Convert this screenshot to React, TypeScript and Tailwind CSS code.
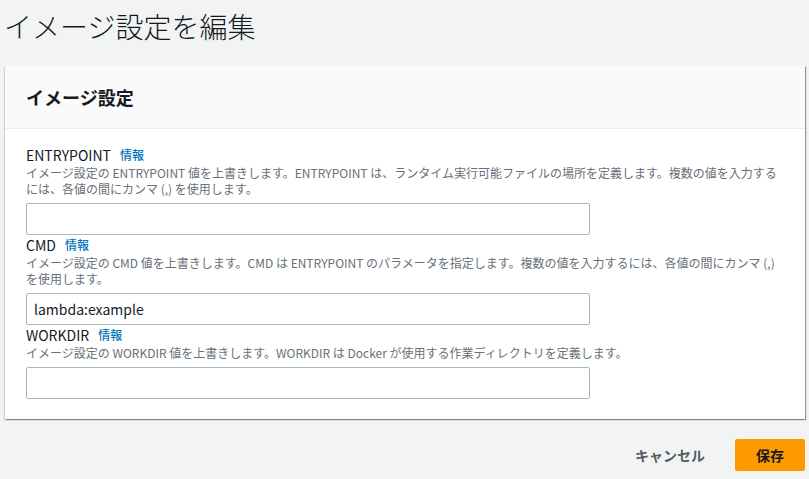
import React from 'react';

const font = { fontFamily: '"Noto Sans CJK JP", "Noto Sans", sans-serif' };

interface FieldProps {
  label: string;
  description: string;
  value?: string;
}

const Field: React.FC<FieldProps> = ({ label, description, value }) => (
  <div className="flex flex-col">
    <div className="flex items-center h-[20px] text-[14px] text-[#16191f]">
      <span>{label}</span>
      <a className="ml-[9px] text-[12px] font-medium text-[#0073bb]">情報</a>
    </div>
    <p className="text-[12px] leading-[16px] text-[#687078]">{description}</p>
    <div className="mt-[6px] w-[564px] h-[32px] border border-[#aab7b8] rounded-[2px] bg-white flex items-center px-[7px] text-[14px] text-[#16191f]">
      {value}
    </div>
  </div>
);

export default function App() {
  return (
    <div className="min-h-[479px] bg-[#f2f3f3] px-[5px]" style={font}>
      <h1 className="text-[28px] leading-[52px] font-light text-[#16191f] -ml-[1px]">イメージ設定を編集</h1>
      <div className="mt-[14px] w-[800px] bg-white shadow-[1px_1px_1px_0_rgba(0,28,36,0.3),1px_1px_1px_0_rgba(0,28,36,0.15),-1px_1px_1px_0_rgba(0,28,36,0.15)]">
        <div className="bg-[#fafafa] border-b border-[#eaeded] px-[21px] py-[20px]">
          <h2 className="text-[18px] leading-[22px] font-bold text-[#16191f]">イメージ設定</h2>
        </div>
        <div className="px-[21px] pt-[16px] pb-[20px] pr-[19px] flex flex-col">
          <Field
            label="ENTRYPOINT"
            description="イメージ設定の ENTRYPOINT 値を上書きします。ENTRYPOINT は、ランタイム実行可能ファイルの場所を定義します。複数の値を入力するには、各値の間にカンマ (,) を使用します。"
          />
          <Field
            label="CMD"
            description="イメージ設定の CMD 値を上書きします。CMD は ENTRYPOINT のパラメータを指定します。複数の値を入力するには、各値の間にカンマ (,) を使用します。"
            value="lambda:example"
          />
          <Field
            label="WORKDIR"
            description="イメージ設定の WORKDIR 値を上書きします。WORKDIR は Docker が使用する作業ディレクトリを定義します。"
          />
        </div>
      </div>
      <div className="w-[800px] flex justify-end items-center gap-[10px] pt-[20px]">
        <button className="h-[32px] px-[20px] text-[14px] font-bold text-[#545b64]">キャンセル</button>
        <button className="h-[32px] w-[70px] rounded-[2px] bg-[#ff9900] text-[14px] font-bold text-[#16191f]">保存</button>
      </div>
    </div>
  );
}
